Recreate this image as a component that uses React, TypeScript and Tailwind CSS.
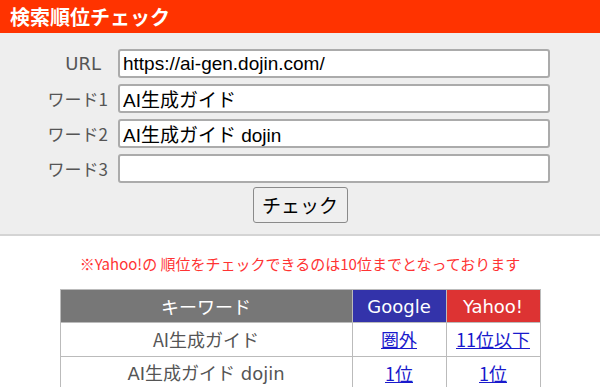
import React from "react";

const jp = { fontFamily: '"Noto Sans CJK JP", "Noto Sans", sans-serif' };
const wide = { fontFamily: '"DejaVu Sans", "Noto Sans CJK JP", sans-serif' };
const mix = { fontFamily: '"Liberation Sans", "Noto Sans CJK JP", sans-serif' };

function Row({ label, value, pr }: { label: string; value: string; pr?: boolean }) {
  return (
    <div className="flex items-center h-[29px]">
      <div
        className={`w-[108px] text-right text-[17px] leading-none text-[#555] ${pr ? "pr-[7px]" : ""}`}
        style={pr ? { ...wide, fontSize: "18px" } : jp}
      >
        {label}
      </div>
      <input
        readOnly
        value={value}
        className="ml-[10px] w-[432px] h-[29px] bg-white border-2 border-[#ababab] rounded-[3px] px-[3px] text-[19px] text-black outline-none"
        style={mix}
      />
    </div>
  );
}

export default function App() {
  return (
    <div className="w-[600px] h-[387px] overflow-hidden bg-white">
      <div
        className="h-[33px] bg-[#ff3300] px-[10px] flex items-center text-white font-bold text-[20px]"
        style={jp}
      >
        検索順位チェック
      </div>
      <div className="bg-[#eeeeee] pt-[16px] pb-[11px] border-b-2 border-[#d4d4d4]">
        <div className="flex flex-col gap-[6px]">
          <Row label="URL" value="https://ai-gen.dojin.com/" pr />
          <Row label="ワード1" value="AI生成ガイド" />
          <Row label="ワード2" value="AI生成ガイド dojin" />
          <Row label="ワード3" value="" />
        </div>
        <div className="flex justify-center mt-[4px]">
          <button
            className="w-[95px] h-[36px] bg-[#efefef] border border-[#8a8a8a] rounded-[3px] text-[19px] text-black"
            style={jp}
          >
            チェック
          </button>
        </div>
      </div>
      <div
        className="mt-[18px] text-center text-[15px] leading-[20px] text-[#ff3333]"
        style={jp}
      >
        ※Yahoo!の 順位をチェックできるのは10位までとなっております
      </div>
      <table
        className="mt-[15px] mx-auto w-[481px] border-collapse text-[18px]"
        style={jp}
      >
        <thead>
          <tr className="h-[33px] text-white">
            <th className="w-[292px] bg-[#777777] border border-[#bbbbbb] font-normal text-[18px]">キーワード</th>
            <th className="w-[94px] bg-[#3333aa] border border-[#bbbbbb] font-normal text-[18px]" style={wide}>Google</th>
            <th className="w-[94px] bg-[#dd3333] border border-[#bbbbbb] font-normal text-[18px]" style={wide}>Yahoo!</th>
          </tr>
        </thead>
        <tbody className="text-[#555]">
          <tr className="h-[34px]">
            <td className="border border-[#bbbbbb] text-center">AI生成ガイド</td>
            <td className="border border-[#bbbbbb] text-center">
              <a className="text-[#1a1acc] underline">圏外</a>
            </td>
            <td className="border border-[#bbbbbb] text-center">
              <a className="text-[#1a1acc] underline">11位以下</a>
            </td>
          </tr>
          <tr className="h-[34px]">
            <td className="border border-[#bbbbbb] text-center" style={wide}>AI生成ガイド dojin</td>
            <td className="border border-[#bbbbbb] text-center">
              <a className="text-[#1a1acc] underline">1位</a>
            </td>
            <td className="border border-[#bbbbbb] text-center">
              <a className="text-[#1a1acc] underline">1位</a>
            </td>
          </tr>
        </tbody>
      </table>
    </div>
  );
}
